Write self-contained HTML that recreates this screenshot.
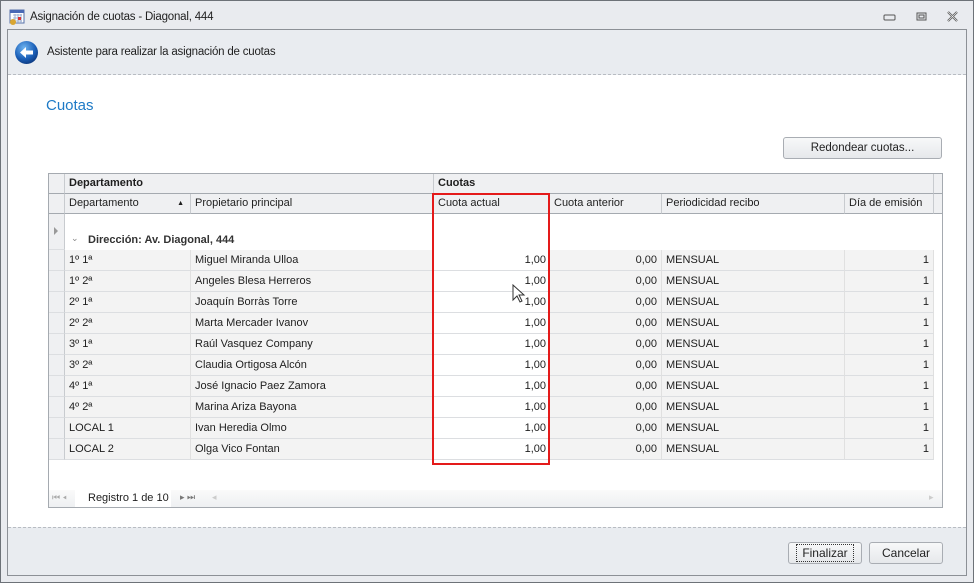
<!DOCTYPE html>
<html><head><meta charset="utf-8"><style>
*{margin:0;padding:0;box-sizing:border-box}
body{width:974px;height:583px;overflow:hidden;background:#e9ecf0;font-family:"Liberation Sans",sans-serif;font-size:11px;color:#1e1e1e;position:relative}
.abs{position:absolute}
#win{left:0;top:0;width:974px;height:583px;border:1px solid #6d7278;background:#e9ebef}
#inner{left:7px;top:29px;width:960px;height:547px;border:1px solid #8c9096;background:#fff}
#hdr{left:0;top:0;width:958px;height:45px;background:#e9ecf0;border-bottom:1px dashed #b8bcc2}
#ftr{left:0;top:497px;width:958px;height:48px;background:#e9ecf0;border-top:1px dashed #b8bcc2}
.btn{border:1px solid #a9adb3;border-radius:3px;background:linear-gradient(#f7f8f9,#e6e8eb);text-align:center;font-size:12px;color:#222}
.grid{left:48px;top:173px;width:895px;height:335px;border:1px solid #a5aab0;background:#fff}
.cell{position:absolute;height:21px;line-height:20px;padding:0 4px;white-space:nowrap;overflow:hidden}
.hd{background:#eff0f2;border-right:1px solid #c8cbcf;border-bottom:1px solid #a5aab0;height:20px;line-height:19px;font-size:11px}
</style></head><body>
<div id="win" class="abs"></div>
<svg class="abs" style="left:9px;top:9px" width="16" height="16"><rect x="1" y="1" width="14" height="13" fill="#fff" stroke="#5670a8"/><rect x="1" y="1" width="14" height="3" fill="#4a69b5"/><path d="M4 6h9M4 9h9M4 12h9M6 5v9M9 5v9M12 5v9" stroke="#8aa0c8" stroke-width=".8"/><rect x="9" y="8" width="3" height="3" fill="#d33"/><circle cx="4" cy="13" r="3" fill="#d9a632"/></svg>
<div class="abs" style="left:30px;top:11px;font-size:11.5px;color:#222;letter-spacing:-0.2px">Asignación de cuotas - Diagonal, 444</div>
<svg class="abs" style="left:880px;top:10px" width="80" height="14"><rect x="4" y="5" width="11" height="5" rx="1" fill="none" stroke="#555"/><rect x="37" y="3" width="9" height="7" fill="none" stroke="#555"/><rect x="39" y="5" width="5" height="3" fill="none" stroke="#555"/><path d="M68 2l9 9M77 2l-9 9" stroke="#555" stroke-width="2.2"/><path d="M68 2l9 9M77 2l-9 9" stroke="#eee" stroke-width=".7"/></svg>
<div id="inner" class="abs">
 <div id="hdr" class="abs">
  <svg class="abs" style="left:6px;top:10px" width="25" height="25"><defs><radialGradient id="g" cx=".4" cy=".3" r=".8"><stop offset="0" stop-color="#6fb4f0"/><stop offset=".6" stop-color="#1a5fb8"/><stop offset="1" stop-color="#0a2f70"/></radialGradient></defs><circle cx="12.5" cy="12.5" r="11.5" fill="url(#g)"/><path d="M6 12.5l6-5.5v3.5h7v4h-7v3.5z" fill="#fff"/></svg>
  <div class="abs" style="left:39px;top:16px;font-size:11.5px;color:#222;letter-spacing:-0.2px">Asistente para realizar la asignación de cuotas</div>
 </div>
 <div class="abs" style="left:38px;top:67px;font-size:15px;color:#1e7ac6">Cuotas</div>
 <div class="abs btn" style="left:775px;top:107px;width:159px;height:22px;line-height:20px;font-size:11.5px">Redondear cuotas...</div>
 <div id="ftr" class="abs">
  <div class="abs btn" style="left:780px;top:14px;width:74px;height:22px;line-height:20px"><span style="outline:1px dotted #333;padding:1px 5px">Finalizar</span></div>
  <div class="abs btn" style="left:861px;top:14px;width:74px;height:22px;line-height:20px">Cancelar</div>
 </div>
</div>
<div class="abs grid">
 <div class="cell hd" style="left:0;top:0;width:16px"></div>
 <div class="cell hd" style="left:16px;top:0;width:369px;font-weight:bold">Departamento</div>
 <div class="cell hd" style="left:385px;top:0;width:500px;font-weight:bold">Cuotas</div>
 <div class="cell hd" style="left:885px;top:0;width:8px;border-right:none"></div>
 <div class="cell hd" style="left:0;top:20px;width:16px"></div>
 <div class="cell hd" style="left:16px;top:20px;width:126px">Departamento<span style="position:absolute;right:6px;font-size:7px">▲</span></div>
 <div class="cell hd" style="left:142px;top:20px;width:243px">Propietario principal</div>
 <div class="cell hd" style="left:385px;top:20px;width:116px">Cuota actual</div>
 <div class="cell hd" style="left:501px;top:20px;width:112px">Cuota anterior</div>
 <div class="cell hd" style="left:613px;top:20px;width:183px">Periodicidad recibo</div>
 <div class="cell hd" style="left:796px;top:20px;width:89px">Día de emisión</div>
 <div class="cell hd" style="left:885px;top:20px;width:8px;border-right:none"></div>
 <div class="abs" style="left:0;top:40px;width:16px;height:36px;background:#eff0f2;border-right:1px solid #c8cbcf;border-bottom:1px solid #dcdee1"></div>
 <div class="abs" style="left:5px;top:53px;width:0;height:0;border-left:4px solid #999;border-top:4px solid transparent;border-bottom:4px solid transparent"></div>
 <div class="abs" style="left:22px;top:59px;font-size:9px;color:#888">⌄</div>
 <div class="abs" style="left:39px;top:60px;font-weight:bold;font-size:11px;color:#333">Dirección: Av. Diagonal, 444</div>
 <div id="rows"></div>
 <div class="abs" style="left:0;top:316px;width:893px;height:17px;background:linear-gradient(#fafafa,#eef0f2)"></div>
 <div class="abs" style="left:3px;top:318px;font-size:9px;color:#aaa">⏮ ◂</div>
 <div class="abs" style="left:26px;top:316px;width:96px;height:17px;background:#fff"></div>
 <div class="abs" style="left:39px;top:318px;font-size:11px">Registro 1 de 10</div>
 <div class="abs" style="left:131px;top:318px;font-size:9px;color:#777">▸ ⏭</div>
 <div class="abs" style="left:163px;top:318px;font-size:9px;color:#ccc">◂</div>
 <div class="abs" style="left:880px;top:318px;font-size:9px;color:#ccc">▸</div>
</div>
<div class="abs" style="left:432px;top:193px;width:118px;height:272px;border:2px solid #e41a1a"></div>
<svg class="abs" style="left:512px;top:284px" width="14" height="20"><path d="M1 1v15l4-4 3 6 2-1-3-6h5z" fill="#fff" stroke="#333"/></svg>
<script>
var d=[["1º 1ª","Miguel Miranda Ulloa"],["1º 2ª","Angeles Blesa Herreros"],["2º 1ª","Joaquín Borràs Torre"],["2º 2ª","Marta Mercader Ivanov"],["3º 1ª","Raúl Vasquez Company"],["3º 2ª","Claudia Ortigosa Alcón"],["4º 1ª","José Ignacio Paez Zamora"],["4º 2ª","Marina Ariza Bayona"],["LOCAL 1","Ivan Heredia Olmo"],["LOCAL 2","Olga Vico Fontan"]];
var h="";d.forEach(function(r,i){var t=76+i*21;var b="border-bottom:1px solid #dcdee1;";
h+='<div class="cell" style="left:0;top:'+t+'px;width:16px;background:#eff0f2;border-right:1px solid #c8cbcf;'+b+'"></div>';
h+='<div class="cell" style="left:16px;top:'+t+'px;width:126px;background:#f3f3f3;border-right:1px solid #e0e0e0;'+b+'">'+r[0]+'</div>';
h+='<div class="cell" style="left:142px;top:'+t+'px;width:243px;background:#f3f3f3;border-right:1px solid #e0e0e0;'+b+'">'+r[1]+'</div>';
h+='<div class="cell" style="left:385px;top:'+t+'px;width:116px;background:#fff;text-align:right;'+b+'">1,00</div>';
h+='<div class="cell" style="left:501px;top:'+t+'px;width:112px;background:#f3f3f3;text-align:right;border-right:1px solid #e0e0e0;'+b+'">0,00</div>';
h+='<div class="cell" style="left:613px;top:'+t+'px;width:183px;background:#f3f3f3;border-right:1px solid #e0e0e0;'+b+'">MENSUAL</div>';
h+='<div class="cell" style="left:796px;top:'+t+'px;width:89px;background:#f3f3f3;text-align:right;border-right:1px solid #e0e0e0;'+b+'">1</div>';});
document.getElementById("rows").innerHTML=h;
</script>
</body></html>
